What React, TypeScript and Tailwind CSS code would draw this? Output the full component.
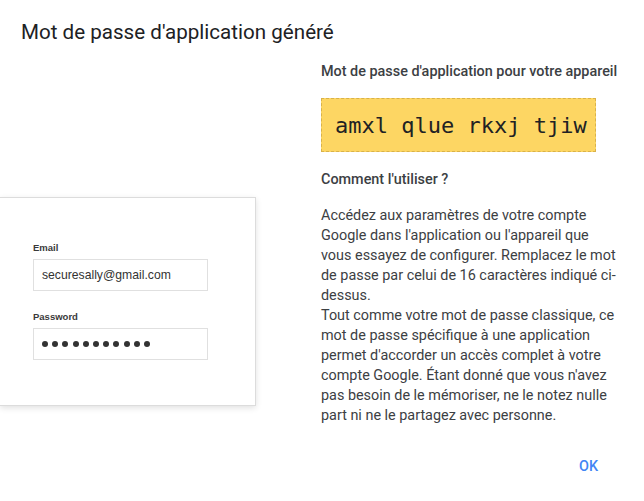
import React from "react";

export default function App() {
  const dots = Array.from({ length: 11 });
  return (
    <div className="w-[644px] h-[501px] bg-white flex flex-col overflow-hidden" style={{ fontFamily: "Roboto, 'Noto Sans', sans-serif" }}>
      <div className="pl-[21px] pt-[19px] text-[20.6px] leading-[26px] text-[#202124]">
        Mot de passe d'application généré
      </div>
      <div className="flex flex-1">
        <div className="w-[321px] shrink-0">
          <div className="mt-[152px] w-[256px] h-[209px] bg-white border border-l-0 border-[#dcdcdc] shadow-[0_2px_6px_rgba(0,0,0,0.12)] pl-[33px] pt-[44px]" style={{ fontFamily: "'Liberation Sans', Arial, sans-serif" }}>
            <div className="text-[9.5px] leading-[12px] font-bold text-[#3a3a3a]">Email</div>
            <div className="mt-[5px] w-[175px] h-[32px] border-[1.5px] border-[#e0e0e0] flex items-center pl-[8px] text-[12.2px] text-[#333]">
              securesally@gmail.com
            </div>
            <div className="mt-[20px] text-[9.5px] leading-[12px] font-bold text-[#3a3a3a]">Password</div>
            <div className="mt-[5px] w-[175px] h-[32px] border-[1.5px] border-[#e0e0e0] flex items-center pl-[8px] gap-[4.2px]">
              {dots.map((_, i) => (
                <span key={i} className="w-[6px] h-[6px] rounded-full bg-[#333]" />
              ))}
            </div>
          </div>
        </div>
        <div className="flex flex-col flex-1 pt-[17px]">
          <div className="text-[14.4px] leading-[20px] font-medium text-[#3c4043]">
            Mot de passe d'application pour votre appareil
          </div>
          <div className="mt-[16px] w-[275px] h-[54px] bg-[#fdd663] border border-dashed border-[#d9b24a] flex items-center pl-[13px] text-[22px] text-[#202124]" style={{ fontFamily: "'DejaVu Sans Mono', monospace" }}>
            amxl qlue rkxj tjiw
          </div>
          <div className="mt-[18px] text-[14.4px] leading-[20px] font-medium text-[#3c4043]">
            Comment l'utiliser ?
          </div>
          <div className="mt-[16px] w-[300px] text-[14.4px] leading-[20px] text-[#3c4043]">
            <p>
              Accédez aux paramètres de votre compte Google dans l'application ou l'appareil que vous essayez de configurer. Remplacez le mot de passe par celui de 16 caractères indiqué ci-dessus.
            </p>
            <p>
              Tout comme votre mot de passe classique, ce mot de passe spécifique à une application permet d'accorder un accès complet à votre compte Google. Étant donné que vous n'avez pas besoin de le mémoriser, ne le notez nulle part ni ne le partagez avec personne.
            </p>
          </div>
          <div className="mt-[31px] flex justify-end pr-[46px]">
            <button className="text-[14.4px] leading-[20px] font-medium text-[#4285f4]">OK</button>
          </div>
        </div>
      </div>
    </div>
  );
}
